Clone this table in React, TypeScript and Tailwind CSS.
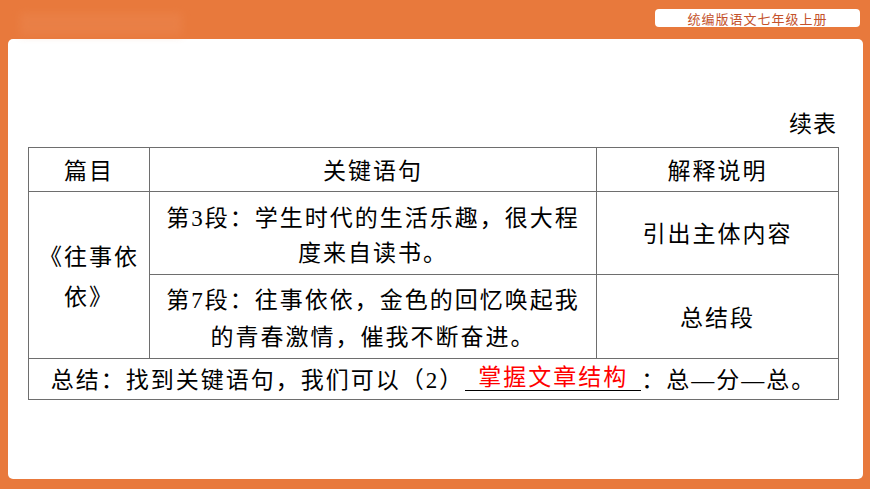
import React from 'react';

const serif = 'font-["Liberation_Serif","Noto_Sans_CJK_SC",serif]';

const cell = 'border border-[#6e6e6e] text-center align-middle p-0 pt-[5px]';

const App: React.FC = () => {
  return (
    <div className="w-[870px] h-[489px] bg-[#e8793c] flex flex-col overflow-hidden">
      {/* top bar */}
      <div className="h-[39px] flex items-start justify-between pl-[20px] pr-[10px] pt-[9px]">
        <div className="mt-[4px] w-[162px] h-[22px] bg-[#ec8a55] blur-[4px] opacity-40" />
        <div className="w-[205px] h-[18px] bg-white rounded-[4px] flex items-center justify-center">
          <span className='text-[13px] leading-none tracking-[1px] text-[#c4522a] font-["Noto_Sans_CJK_SC",sans-serif]'>
            统编版语文七年级上册
          </span>
        </div>
      </div>

      {/* content panel */}
      <div className={`ml-[8px] mr-[7px] h-[440px] bg-white rounded-[5px] flex flex-col ${serif} text-black`}>
        <div className="h-[108px] flex items-end justify-end pr-[26px] pb-[11px]">
          <span className="text-[23px] leading-none tracking-[1px]">续表</span>
        </div>

        <table className="ml-[20px] w-[810px] border-collapse table-fixed text-[23px] tracking-[2px]">
          <colgroup>
            <col className="w-[121px]" />
            <col className="w-[447px]" />
            <col className="w-[242px]" />
          </colgroup>
          <tbody>
            <tr className="h-[44px]">
              <td className={cell}>篇目</td>
              <td className={cell}>关键语句</td>
              <td className={cell}>解释说明</td>
            </tr>
            <tr className="h-[83px]">
              <td rowSpan={2} className={`${cell} leading-[40px]`}>
                《往事依
                <br />
                依》
              </td>
              <td className={`${cell} leading-[35px]`}>
                第3段：学生时代的生活乐趣，很大程
                <br />
                度来自读书。
              </td>
              <td className={cell}>引出主体内容</td>
            </tr>
            <tr className="h-[84px]">
              <td className={`${cell} leading-[37px]`}>
                第7段：往事依依，金色的回忆唤起我
                <br />
                的青春激情，催我不断奋进。
              </td>
              <td className={cell}>总结段</td>
            </tr>
            <tr className="h-[40px]">
              <td colSpan={3} className={`${cell} whitespace-nowrap`}>
                总结：找到关键语句，我们可以（2）
                <span className="inline-block w-[176px] ml-[1px] border-b border-black text-[#ff0000] leading-[24px] -translate-y-[3px]">
                  掌握文章结构
                </span>
                ：总—分—总。
              </td>
            </tr>
          </tbody>
        </table>
      </div>
    </div>
  );
};

export default App;
